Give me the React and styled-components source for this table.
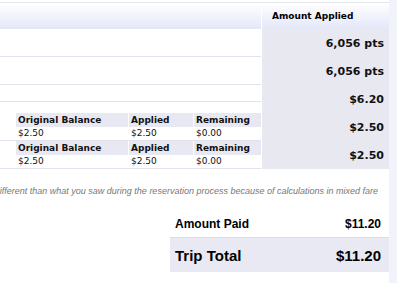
import React from 'react';
import styled, { createGlobalStyle } from 'styled-components';

const rows = [
  { value: '6,056 pts' },
  { value: '6,056 pts' },
  { value: '$6.20', short: true },
  { value: '$2.50', balance: ['$2.50', '$2.50', '$0.00'] },
  { value: '$2.50', balance: ['$2.50', '$2.50', '$0.00'] },
];

const App = () => {
  return (
    <Page>
      <GlobalStyle />
      <Main>
        <Ledger>
          <HeadCell />
          <HeadCell $label>Amount Applied</HeadCell>
          {rows.map((row, i) => (
            <React.Fragment key={i}>
              <LeftCell $short={row.short}>
                {row.balance && (
                  <Balance>
                    <BalanceHead>Original Balance</BalanceHead>
                    <BalanceHead>Applied</BalanceHead>
                    <BalanceHead>Remaining</BalanceHead>
                    {row.balance.map((v, j) => (
                      <BalanceValue key={j}>{v}</BalanceValue>
                    ))}
                  </Balance>
                )}
              </LeftCell>
              <ValueCell>{row.value}</ValueCell>
            </React.Fragment>
          ))}
        </Ledger>
        <Note>
          <span>
            different than what you saw during the reservation process because of calculations in mixed fare
          </span>
        </Note>
        <Totals>
          <TotalRow>
            <span>Amount Paid</span>
            <span>$11.20</span>
          </TotalRow>
          <TotalRow $grand>
            <span>Trip Total</span>
            <span>$11.20</span>
          </TotalRow>
        </Totals>
      </Main>
      <Gutter />
    </Page>
  );
};

const GlobalStyle = createGlobalStyle`
  html, body {
    margin: 0;
    padding: 0;
    background: #ffffff;
  }
  * {
    box-sizing: border-box;
  }
`;

const Page = styled.div`
  display: flex;
  width: 397px;
  height: 283px;
  overflow: hidden;
`;

const Main = styled.div`
  width: 389px;
  overflow: hidden;
`;

const Gutter = styled.div`
  width: 8px;
  background-color: #f1f3fb;
`;

// 위쪽 표
const Ledger = styled.div`
  display: grid;
  grid-template-columns: 261px 127px;
  grid-template-rows: 26px;
  grid-auto-rows: 28px;
  column-gap: 1px;
  margin-top: 2px;
  border-top: 1px solid #e6e6ee;
  font-family: 'DejaVu Sans', Verdana, sans-serif;
  color: #111;
`;

const HeadCell = styled.div`
  background: linear-gradient(#ffffff 0%, #f3f4fc 45%, #e3e7f8 100%);
  display: flex;
  align-items: center;
  padding-left: 10px;
  font-size: 9px;
  font-weight: bold;
  color: #000;
`;

const LeftCell = styled.div`
  border-bottom: 1px solid #e2e2ec;
  height: ${(p) => (p.$short ? '17px' : '28px')};
  align-self: start;
`;

const ValueCell = styled.div`
  background-color: #e8e8f1;
  display: flex;
  align-items: center;
  justify-content: flex-end;
  padding-right: 5px;
  font-size: 11px;
  font-weight: bold;
`;

const Balance = styled.div`
  display: grid;
  grid-template-columns: 112px 64px 67px;
  grid-template-rows: 14px 13px;
  column-gap: 1px;
  margin-left: 16px;
  font-size: 9px;
`;

const BalanceHead = styled.div`
  background-color: #e8e8f2;
  padding-left: 2px;
  font-weight: bold;
  line-height: 14px;
`;

const BalanceValue = styled.div`
  padding-left: 2px;
  line-height: 13px;
`;

const Note = styled.div`
  display: flex;
  justify-content: flex-end;
  white-space: nowrap;
  margin-top: 16px;
  padding-right: 11px;
  font-family: 'Liberation Sans', Arial, sans-serif;
  font-style: italic;
  font-size: 9px;
  line-height: 12px;
  color: #777;
`;

// 합계
const Totals = styled.div`
  width: 219px;
  margin-left: auto;
  margin-top: 13px;
  font-family: 'Liberation Sans', Arial, sans-serif;
  font-weight: bold;
  color: #000;
`;

const TotalRow = styled.div`
  display: flex;
  justify-content: space-between;
  align-items: center;
  padding: 0 8px 0 5px;
  height: ${(p) => (p.$grand ? '34px' : '28px')};
  font-size: ${(p) => (p.$grand ? '15px' : '12px')};
  background-color: ${(p) => (p.$grand ? '#e9e9f3' : 'transparent')};
  border-bottom: ${(p) => (p.$grand ? 'none' : '1px solid #dcdce6')};
`;

export default App;
